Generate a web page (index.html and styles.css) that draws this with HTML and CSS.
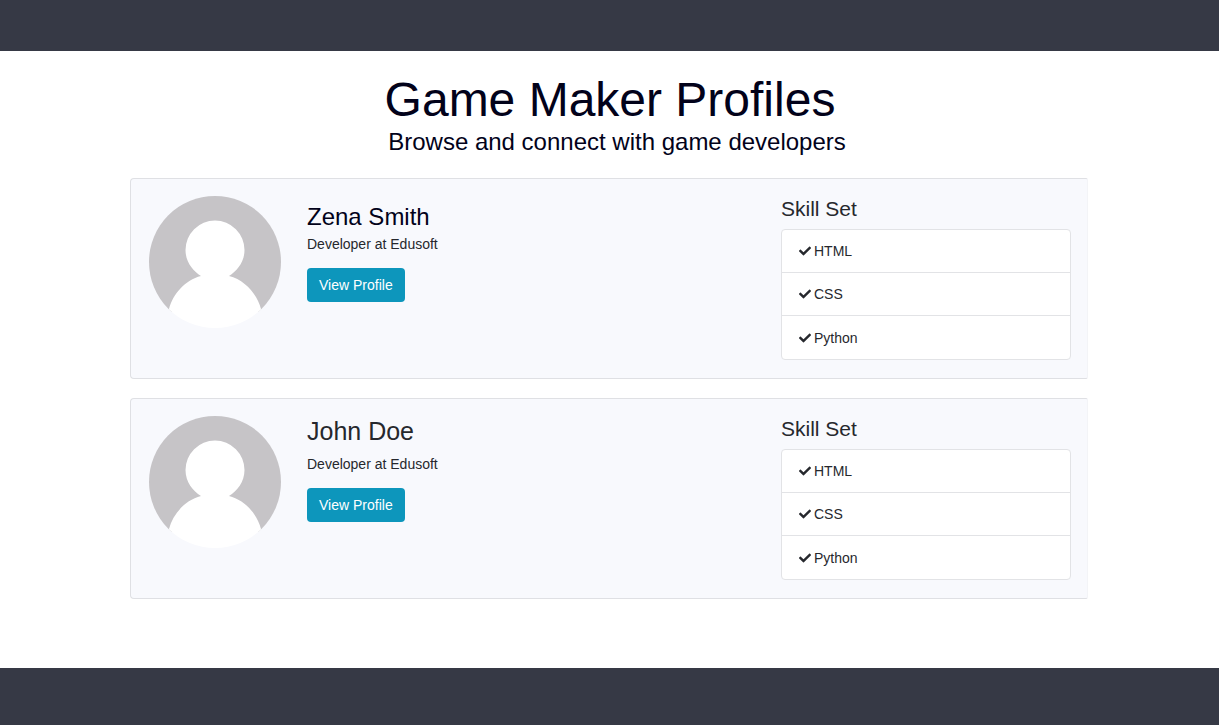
FILE: index.html
```html
<!DOCTYPE html>
<html lang="en">
<head>
<meta charset="utf-8">
<meta name="viewport" content="width=device-width, initial-scale=1">
<title>Game Maker Profiles</title>
<link rel="stylesheet" href="styles.css">
</head>
<body class="page">
<svg class="sprite" aria-hidden="true">
  <symbol id="check" viewBox="0 0 512 512"><path fill="currentColor" d="M173.900 439.400l-166.400-166.400c-10-10-10-26.200 0-36.200l36.200-36.200c10-10 26.200-10 36.200 0L192 312.700 432.100 72.600c10-10 26.200-10 36.200 0l36.200 36.200c10 10 10 26.200 0 36.200l-294.400 294.400c-10 10-26.200 10-36.200 0z"/></symbol>
  <symbol id="avatar" viewBox="0 0 132 132">
    <clipPath id="disc"><circle cx="66" cy="66" r="66"/></clipPath>
    <g clip-path="url(#disc)">
      <rect width="132" height="116" fill="#c6c4c7"/>
      <path fill="#fff" d="M52 80C44 75 36.500 66 36.500 54a29.500 29.500 0 0 1 59 0C95.500 66 88 75 80 80C96 84 108 98 112 113L112 132H20V113C24 98 36 84 52 80z"/>
    </g>
  </symbol>
</svg>
<header class="bar bar-top"></header>
<main class="content">
  <div class="intro">
    <h1 class="title">Game Maker Profiles</h1>
    <p class="subtitle">Browse and connect with game developers</p>
  </div>
  <article class="card">
    <svg class="avatar" role="img" aria-label="Zena Smith"><use href="#avatar"/></svg>
    <div class="info">
      <h2 class="name name-featured">Zena Smith</h2>
      <p class="role">Developer at Edusoft</p>
      <a class="button" href="#zena-smith">View Profile</a>
    </div>
    <section class="skills">
      <h3 class="skills-title">Skill Set</h3>
      <ul class="skill-list">
        <li class="skill"><svg class="check"><use href="#check"/></svg>HTML</li>
        <li class="skill"><svg class="check"><use href="#check"/></svg>CSS</li>
        <li class="skill"><svg class="check"><use href="#check"/></svg>Python</li>
      </ul>
    </section>
  </article>
  <article class="card">
    <svg class="avatar" role="img" aria-label="John Doe"><use href="#avatar"/></svg>
    <div class="info">
      <h2 class="name">John Doe</h2>
      <p class="role">Developer at Edusoft</p>
      <a class="button" href="#john-doe">View Profile</a>
    </div>
    <section class="skills">
      <h3 class="skills-title">Skill Set</h3>
      <ul class="skill-list">
        <li class="skill"><svg class="check"><use href="#check"/></svg>HTML</li>
        <li class="skill"><svg class="check"><use href="#check"/></svg>CSS</li>
        <li class="skill"><svg class="check"><use href="#check"/></svg>Python</li>
      </ul>
    </section>
  </article>
</main>
<footer class="bar bar-bottom"></footer>
</body>
</html>
```
FILE: styles.css
```css
* {
  box-sizing: border-box;
}

.page {
  margin: 0;
  min-height: 100vh;
  display: flex;
  flex-direction: column;
  background: #fff;
  color: #26282d;
  font-family: "Liberation Sans", Arial, sans-serif;
  font-size: 14px;
  line-height: 20px;
}

.sprite {
  position: absolute;
  width: 0;
  height: 0;
}

.bar {
  background: #363945;
}

.bar-top {
  padding-top: 51px;
}

.bar-bottom {
  padding-top: 57px;
}

.content {
  flex: 1;
  display: flex;
  flex-direction: column;
  gap: 19px;
  padding: 21px 131px 0 130px;
}

.intro {
  padding: 0 0 3px 2px;
  text-align: center;
  color: #02021a;
}

.title {
  margin: 0;
  font-size: 48px;
  font-weight: 400;
  line-height: 56px;
}

.subtitle {
  margin: 0;
  padding-left: 14px;
  font-size: 24px;
  line-height: 28px;
}

.card {
  display: grid;
  grid-template-columns: 132px 1fr 290px;
  column-gap: 26px;
  align-items: start;
  padding: 17px 16px 18px 18px;
  border: 1px solid #dfe0e4;
  border-right-color: #f3f4f7;
  border-radius: 4px 2px 2px 4px;
  background: #f8f9fd;
}

.avatar {
  display: block;
  width: 132px;
  height: 132px;
}

.name {
  margin: 0;
  padding-bottom: 8px;
  font-size: 25px;
  font-weight: 400;
  line-height: 30px;
}

.name-featured {
  padding: 6px 0 2px;
  color: #02021a;
  font-size: 24px;
}

.role {
  margin: 0 0 14px;
}

.button {
  display: inline-block;
  padding: 7px 12px;
  border-radius: 4px;
  background: #0d96bc;
  color: #fff;
  text-decoration: none;
}

.skills-title {
  margin: 0;
  padding-bottom: 7px;
  font-size: 21px;
  font-weight: 400;
  line-height: 26px;
}

.skill-list {
  display: grid;
  grid-auto-rows: 1fr;
  min-height: 131px;
  margin: 0;
  padding: 0;
  list-style: none;
  border: 1px solid #e2e3e6;
  border-radius: 4px;
  background: #fff;
}

.skill {
  display: flex;
  align-items: center;
  gap: 3px;
  padding: 0 17px;
}

.skill:not(:last-child) {
  border-bottom: 1px solid #e2e3e6;
}

.check {
  width: 12px;
  height: 12px;
}
```
